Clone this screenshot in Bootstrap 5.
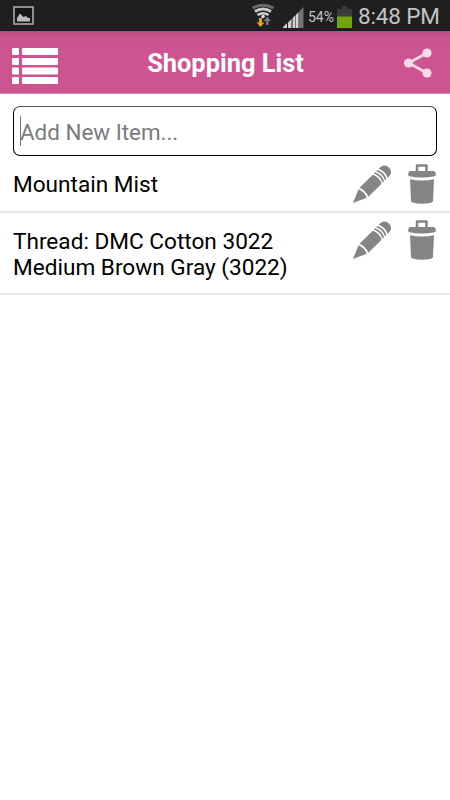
<!DOCTYPE html>
<html lang="en">
<head>
<meta charset="utf-8">
<meta name="viewport" content="width=device-width, initial-scale=1">
<title>Shopping List</title>
<link rel="stylesheet" href="https://cdn.jsdelivr.net/npm/bootstrap@5.3.0/dist/css/bootstrap.min.css">
<style>
body { font-family: Roboto, "Liberation Sans", sans-serif; color: #000; background: #fff; }
svg { display: block; flex: none; }
.status-bar { height: 31px; background: #1f1f1f; border-bottom: 1px solid #0f1b19; color: #c3c3c3; padding: 0 9px 0 13px; }
.signal { margin-left: 8px; margin-top: 4px; }
.battery-icon { margin-top: 3px; }
.battery-pct { font-size: 14px; line-height: 31px; padding-top: 4px; width: 27px; margin-left: 4px; margin-right: 2px; }
.clock { font-size: 22.5px; letter-spacing: -.15px; line-height: 31px; padding-top: 2px; width: 83px; margin-left: 6px; }
.app-header { height: 63px; background: linear-gradient(#b94d82, #c9538c 6px, #cc5490 12px); border-bottom: 1px solid #dc87b1; padding: 0 17px 0 12px; }
.menu-icon { margin-top: 8px; }
.share-icon { margin-top: 1px; }
.app-title { font-size: 25.4px; line-height: 60px; padding-top: 2px; padding-right: 10px; }
.add-input { height: 50px; border: 1px solid #000; border-top-color: #555; border-radius: 7px; padding: 0 6px; font-size: 22.4px; margin: 12px 13px 0; }
.add-input .caret { width: 1px; height: 30px; background: #777; }
.hint { color: #7b7b7b; line-height: 48px; padding-top: 1px; margin-left: -1px; }
.item-row { border: 0; border-bottom: 2px solid #e8e8e8 !important; color: #000; font-size: 22.6px; line-height: 26.4px; padding: 0 14px 0 13px; }
.item-first { height: 57px; }
.item-second { height: 82px; }
.item-text { padding-top: 16px; }
.item-icons { padding-top: 7px; gap: 17px; }
.item-first .item-icons { padding-top: 8px; }
</style>
<script src="https://cdn.jsdelivr.net/npm/bootstrap@5.3.0/dist/js/bootstrap.bundle.min.js"></script>
</head>
<body>
<svg width="0" height="0" class="position-absolute" aria-hidden="true">
  <symbol id="pencil" viewBox="0 0 38 40">
    <g transform="translate(0 39) rotate(-44.500)" fill="#858585">
      <path d="M0 0 L13.500 -5.900 Q16 0 13.500 5.900 Z"/>
      <path d="M15.300 -6.300 H34 Q37 0 34 6.300 H15.300 Q17.800 0 15.300 -6.300Z"/>
      <path d="M35.500 -6.300 H37.400 Q40.400 0 37.400 6.300 H35.500 Q38.500 0 35.500 -6.300Z"/>
      <path d="M38.900 -6.300 H40.800 Q43.800 0 40.800 6.300 H38.900 Q41.900 0 38.900 -6.300Z"/>
      <path d="M42.300 -6.300 H45 Q50.500 -5.500 50.500 0 Q50.500 5.500 45 6.300 H42.300 Q45.300 0 42.300 -6.300Z"/>
    </g>
  </symbol>
  <symbol id="trash" viewBox="0 0 28 40">
    <path d="M9 8 V1.500 H18.500 V8" fill="none" stroke="#858585" stroke-width="2.600" stroke-linejoin="round"/>
    <path d="M2.500 7 H25.500 Q27.700 7 27.700 9.500 V12 Q14 15.200 .3 12 V9.500 Q.3 7 2.500 7Z" fill="#858585"/>
    <path d="M2 15.200 Q14 17.800 26 15.200 L25 37 Q24.500 39.700 14 39.700 Q3.500 39.700 3 37Z" fill="#858585"/>
  </symbol>
</svg>

<div class="status-bar d-flex align-items-center">
  <svg width="21" height="19" viewBox="0 0 21 19"><rect x="1" y="1" width="19" height="17" fill="#161616" stroke="#aaa" stroke-width="1.6"/><path d="M4 15.500V12l3-4.500 3.500 3.500 2.500-1 2 2h2v3.500z" fill="#bbb"/></svg>
  <svg class="ms-auto" width="24" height="24" viewBox="0 0 24 24">
    <path d="M1.500 5 Q12 -.5 22.500 5" fill="none" stroke="#6a6a6a" stroke-width="3"/>
    <path d="M4 8.500 Q12 3.500 20 8.500" fill="none" stroke="#c8c8c8" stroke-width="3"/>
    <path d="M6.500 12 Q12 8.500 17.500 12" fill="none" stroke="#d0d0d0" stroke-width="2.600"/>
    <circle cx="12" cy="13.500" r="1.800" fill="#ddd"/>
    <path d="M8 15h3v4.500h2.500L9.500 24l-4-4.500H8z" fill="#dca81a"/>
    <path d="M15 22h2.500v-4h2.500l-3.800-4.500-3.700 4.500H15z" fill="#777"/>
  </svg>
  <svg class="signal" width="21" height="21" viewBox="0 0 21 21"><path d="M0 21V20L4 16V21ZM5 21V15.500L8.500 12V21ZM9.500 21V11L12.500 8V21Z" fill="#cecece"/><path d="M13 21V7.500L15.500 5V21Z" fill="#d5d5d5"/><path d="M16 21V4.500L20.500 0V21Z" fill="#717171"/></svg>
  <span class="battery-pct text-nowrap">54%</span>
  <svg class="battery-icon" width="15" height="22" viewBox="0 0 15 22"><path d="M0 3H5V0H10V3H15V11H0Z" fill="#3c3c3c"/><path d="M0 10.500H15V22H0Z" fill="#75a30b"/></svg>
  <span class="clock text-nowrap">8:48 PM</span>
</div>

<header class="app-header d-flex align-items-center justify-content-between">
  <svg class="menu-icon" width="46" height="36" viewBox="0 0 46 36" fill="#fff" role="img" aria-label="Menu">
    <rect width="7" height="7" rx="1"/><rect x="10" width="36" height="7" rx="1"/>
    <rect y="10" width="7" height="7" rx="1"/><rect x="10" y="10" width="36" height="7" rx="1"/>
    <rect y="19.500" width="7" height="7" rx="1"/><rect x="10" y="19.500" width="36" height="7" rx="1"/>
    <rect y="29" width="7" height="7" rx="1"/><rect x="10" y="29" width="36" height="7" rx="1"/>
  </svg>
  <h1 class="app-title fw-bold text-white m-0 text-nowrap">Shopping List</h1>
  <svg class="share-icon" width="30" height="30" viewBox="0 0 30 30" role="img" aria-label="Share"><path d="M24 5 5.500 15 24 25" fill="none" stroke="#f6d9e7" stroke-width="2.600"/><g fill="#f6d9e7"><circle cx="24" cy="5" r="4.600"/><circle cx="5.500" cy="15" r="4.600"/><circle cx="24" cy="25" r="4.600"/></g></svg>
</header>

<main>
  <div class="add-input d-flex align-items-center">
    <span class="caret"></span><span class="hint">Add New Item...</span>
  </div>
  <ul class="list-group list-group-flush">
    <li class="list-group-item item-row item-first d-flex justify-content-between align-items-start">
      <span class="item-text">Mountain Mist</span>
      <span class="item-icons d-flex"><svg width="38" height="40"><use href="#pencil"/></svg><svg width="28" height="40"><use href="#trash"/></svg></span>
    </li>
    <li class="list-group-item item-row item-second d-flex justify-content-between align-items-start">
      <span class="item-text">Thread: DMC Cotton 3022<br>Medium Brown Gray (3022)</span>
      <span class="item-icons d-flex"><svg width="38" height="40"><use href="#pencil"/></svg><svg width="28" height="40"><use href="#trash"/></svg></span>
    </li>
  </ul>
</main>
</body>
</html>
